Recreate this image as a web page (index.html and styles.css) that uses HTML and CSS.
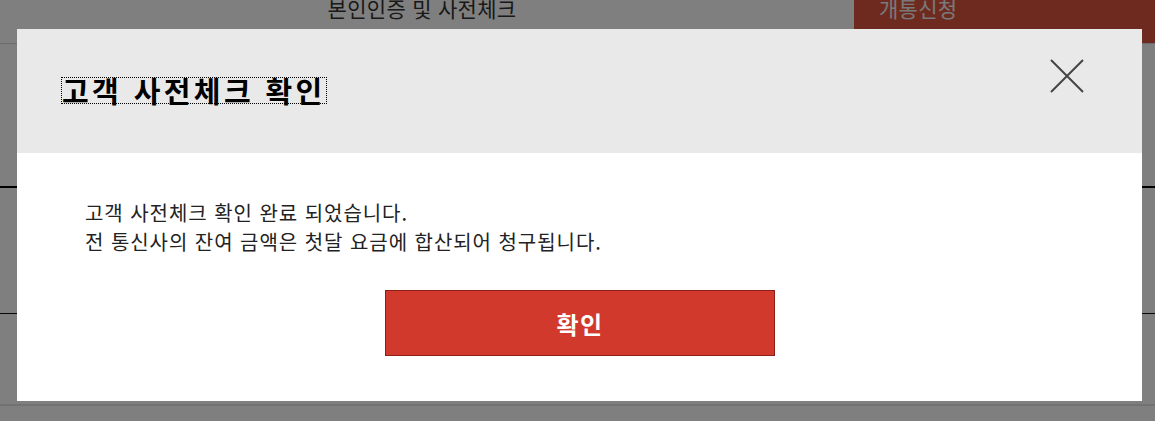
FILE: index.html
```html
<!DOCTYPE html>
<html lang="ko">
<head>
    <meta charset="utf-8">
    <title>고객 사전체크 확인</title>
    <link rel="stylesheet" href="styles.css">
</head>
<body>
    <!-- Page behind the popup (scrolled a little) -->
    <div class="page">
        <div class="tabs">
            <div class="tab">본인인증 및 사전체크</div>
            <div class="tab tab-active">개통신청</div>
        </div>
        <div class="row row-first"></div>
        <div class="row row-second"></div>
        <div class="row row-foot"></div>
    </div>

    <div class="dim"></div>

    <!-- Popup -->
    <div class="modal">
        <div class="modal-head">
            <h2 class="modal-title" tabindex="0">고객 사전체크 확인</h2>
            <button class="modal-close" aria-label="닫기">
                <svg width="34" height="34" viewBox="0 0 34 34">
                    <path d="M1 1 L33 33 M33 1 L1 33" stroke="#444" stroke-width="2" fill="none"/>
                </svg>
            </button>
        </div>
        <div class="modal-body">
            <p class="modal-text">고객 사전체크 확인 완료 되었습니다.<br>전 통신사의 잔여 금액은 첫달 요금에 합산되어 청구됩니다.</p>
            <button class="btn-ok">확인</button>
        </div>
    </div>
</body>
</html>
```

FILE: styles.css
```css
/* Base */
* {
    box-sizing: border-box;
}
body {
    margin: 0;
    font-family: "Noto Sans CJK KR", "Noto Sans", sans-serif;
    background-color: #fff;
    color: #222;
    overflow: hidden;
}

/* Page underneath the popup */
.page {
    margin-top: -16px;
}
.tabs {
    display: flex;
    height: 60px;
    border-bottom: 1px solid #d8d8d8;
}
.tab {
    flex: 1;
    text-align: center;
    font-size: 21px;
    letter-spacing: 0.3px;
    line-height: 28px;
    padding: 10px 10px 0 0;
    color: #333;
}
.tab-active {
    flex: 0 0 301px;
    text-align: left;
    padding-left: 25px;
    background-color: #dc543e;
    color: #f2f2f2;
}
.row-first {
    height: 144px;
    border-bottom: 2px solid #000;
}
.row-second {
    height: 126px;
    border-bottom: 1px solid #111;
}
.row-foot {
    height: 92px;
    border-bottom: 2px solid #e4e4e4;
}

/* Dimmed layer */
.dim {
    position: fixed;
    inset: 0;
    background-color: rgba(0, 0, 0, 0.5);
}

/* Popup */
.modal {
    position: fixed;
    top: 29px;
    left: 17px;
    width: 1125px;
    background-color: #fff;
}
.modal-head {
    display: flex;
    justify-content: space-between;
    align-items: center;
    height: 124px;
    padding: 0 58px 0 45px;
    background-color: #e9e9e9;
}
.modal-title {
    margin: 0 0 2px;
    font-size: 29px;
    font-weight: bold;
    letter-spacing: 3.4px;
    line-height: 25px;
    color: #000;
    outline: 1px dotted #000;
}
.modal-close {
    align-self: flex-start;
    margin-top: 30px;
    padding: 0;
    border: none;
    background: none;
    cursor: pointer;
}
.modal-close svg {
    display: block;
}
.modal-body {
    padding: 45px 68px 45px;
    display: flex;
    flex-direction: column;
}
.modal-text {
    margin: 0 0 34px;
    font-size: 20px;
    letter-spacing: 0.95px;
    line-height: 29px;
    color: #222;
}
.btn-ok {
    align-self: center;
    width: 390px;
    height: 66px;
    margin-left: 1px;
    font-family: inherit;
    font-size: 24px;
    font-weight: bold;
    letter-spacing: 1.5px;
    color: #fff;
    background-color: #d1392c;
    border: 1px solid #8e1f18;
    cursor: pointer;
}
```
